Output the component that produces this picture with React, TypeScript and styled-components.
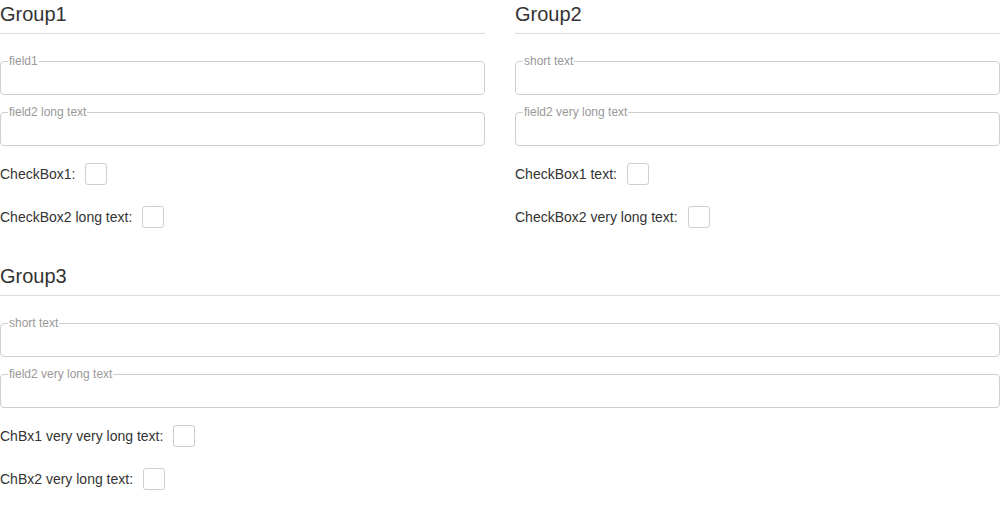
import React from "react";
import styled, { createGlobalStyle } from "styled-components";

const GlobalStyle = createGlobalStyle`
  html, body { margin: 0; padding: 0; background: #fff; }
  body { font-family: "Liberation Sans", Arial, Helvetica, sans-serif; color: #333; }
  * { box-sizing: border-box; }
`;

const Page = styled.div`
  width: 1000px;
  display: flex;
  flex-direction: column;
  gap: 34px;
`;

const TopRow = styled.div`
  display: grid;
  grid-template-columns: 1fr 1fr;
  column-gap: 30px;
`;

const Group = styled.section`
  display: flex;
  flex-direction: column;
`;

const GroupTitle = styled.h2`
  margin: 0;
  font-size: 20px;
  font-weight: 400;
  line-height: 28px;
  padding-bottom: 5px;
  border-bottom: 1px solid #dddddd;
  color: #333;
`;

const Fields = styled.div`
  display: flex;
  flex-direction: column;
  gap: 10px;
  margin-top: 20px;
`;

const FieldBox = styled.fieldset`
  margin: 0;
  padding: 0;
  border: 1px solid #cfcfcf;
  border-radius: 4px;
  min-width: 0;
`;

const Legend = styled.legend`
  margin-left: 7px;
  padding: 0 1px;
  font-size: 12px;
  line-height: 14px;
  color: #999;
`;

const FieldInput = styled.input`
  display: block;
  width: 100%;
  height: 26px;
  border: none;
  outline: none;
  background: transparent;
  padding: 0 8px;
  font-family: inherit;
  font-size: 14px;
  color: #333;
`;

const Checks = styled.div`
  display: flex;
  flex-direction: column;
  gap: 21px;
  margin-top: 17px;
`;

const CheckRow = styled.label`
  display: flex;
  align-items: center;
  gap: 10px;
  height: 22px;
  font-size: 14px;
  color: #333;
`;

const Box = styled.input.attrs({ type: "checkbox" })`
  appearance: none;
  margin: 0;
  width: 22px;
  height: 22px;
  border: 1px solid #cfcfcf;
  border-radius: 3px;
  background: #fff;
`;

type GroupProps = {
  title: string;
  fields: string[];
  checks: string[];
};

function FormGroup({ title, fields, checks }: GroupProps) {
  return (
    <Group>
      <GroupTitle>{title}</GroupTitle>
      <Fields>
        {fields.map((f) => (
          <FieldBox key={f}>
            <Legend>{f}</Legend>
            <FieldInput type="text" />
          </FieldBox>
        ))}
      </Fields>
      <Checks>
        {checks.map((c) => (
          <CheckRow key={c}>
            <span>{c}</span>
            <Box />
          </CheckRow>
        ))}
      </Checks>
    </Group>
  );
}

export default function App() {
  return (
    <>
      <GlobalStyle />
      <Page>
        <TopRow>
          <FormGroup
            title="Group1"
            fields={["field1", "field2 long text"]}
            checks={["CheckBox1:", "CheckBox2 long text:"]}
          />
          <FormGroup
            title="Group2"
            fields={["short text", "field2 very long text"]}
            checks={["CheckBox1 text:", "CheckBox2 very long text:"]}
          />
        </TopRow>
        <FormGroup
          title="Group3"
          fields={["short text", "field2 very long text"]}
          checks={["ChBx1 very very long text:", "ChBx2 very long text:"]}
        />
      </Page>
    </>
  );
}
